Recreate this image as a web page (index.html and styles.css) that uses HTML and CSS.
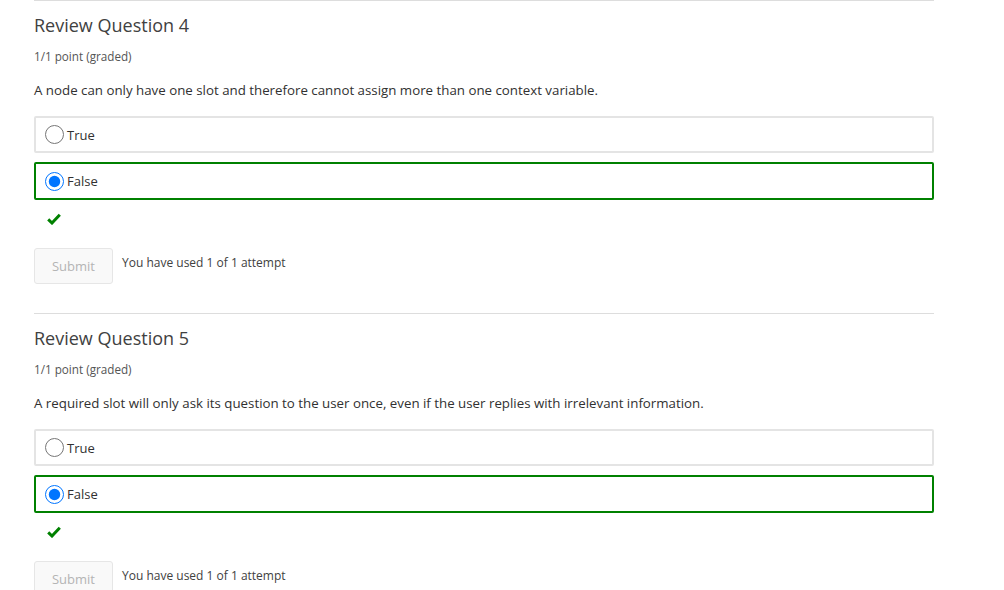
FILE: index.html
```html
<!DOCTYPE html>
<html lang="en">
<head>
<meta charset="utf-8">
<title>Review Questions</title>
<link rel="stylesheet" href="styles.css">
</head>
<body>
<main class="page">
  <section class="problem">
    <h2 class="title">Review Question 4</h2>
    <div class="meta">1/1 point (graded)</div>
    <p class="prompt">A node can only have one slot and therefore cannot assign more than one context variable.</p>
    <div class="choices">
      <label class="choice"><input type="radio" name="q4"><span>True</span></label>
      <label class="choice choice-correct"><input type="radio" name="q4" checked><span>False</span></label>
    </div>
    <div class="status">
      <svg width="14" height="12" viewBox="0 0 14 12"><path d="M1.2 6.4 L5 10 L12.8 1.8" fill="none" stroke="#008100" stroke-width="3"/></svg>
    </div>
    <div class="actions">
      <button class="submit" disabled>Submit</button>
      <span class="attempts">You have used 1 of 1 attempt</span>
    </div>
  </section>
  <section class="problem">
    <h2 class="title">Review Question 5</h2>
    <div class="meta">1/1 point (graded)</div>
    <p class="prompt">A required slot will only ask its question to the user once, even if the user replies with irrelevant information.</p>
    <div class="choices">
      <label class="choice"><input type="radio" name="q5"><span>True</span></label>
      <label class="choice choice-correct"><input type="radio" name="q5" checked><span>False</span></label>
    </div>
    <div class="status">
      <svg width="14" height="12" viewBox="0 0 14 12"><path d="M1.2 6.4 L5 10 L12.8 1.8" fill="none" stroke="#008100" stroke-width="3"/></svg>
    </div>
    <div class="actions">
      <button class="submit" disabled>Submit</button>
      <span class="attempts">You have used 1 of 1 attempt</span>
    </div>
  </section>
</main>
</body>
</html>
```
FILE: styles.css
```css
html, body {
  margin: 0;
  padding: 0;
  background: #fff;
}
body {
  font-family: "Open Sans", "Liberation Sans", sans-serif;
  color: #313131;
  overflow: hidden;
}
.page {
  width: 900px;
  padding: 0 70px 0 34px;
}
.problem {
  border-top: 1px solid #dddddd;
  height: 312px;
}
.title {
  margin: 10px 0 0;
  font-size: 18px;
  line-height: 28px;
  font-weight: 400;
  color: #414141;
}
.meta {
  margin-top: 8px;
  font-size: 11.7px;
  line-height: 18px;
  color: #555;
}
.prompt {
  margin: 15px 0 0;
  font-size: 13.3px;
  line-height: 20px;
  color: #313131;
}
.choices {
  margin-top: 16px;
  display: flex;
  flex-direction: column;
  gap: 9px;
}
.choice {
  box-sizing: border-box;
  display: flex;
  align-items: center;
  height: 37px;
  border: 2px solid #e4e4e4;
  border-radius: 2px;
  font-size: 13px;
  color: #313131;
}
.choice-correct {
  height: 38px;
  border-color: #008100;
}
.choice input {
  width: 19px;
  height: 19px;
  margin: 0 3px 0 9px;
  accent-color: #0075ff;
}
.status {
  margin-top: 12px;
  padding-left: 13px;
  height: 14px;
  display: flex;
  align-items: center;
}
.actions {
  margin-top: 22px;
  display: flex;
  align-items: flex-start;
  gap: 9px;
}
.submit {
  width: 79px;
  height: 36px;
  border: 1px solid #e6e6e6;
  border-radius: 3px;
  background: #f9f9f9;
  color: #b4b4b4;
  font-family: "Open Sans", "Liberation Sans", sans-serif;
  font-size: 13px;
  padding: 0;
}
.attempts {
  margin-top: 7px;
  font-size: 12px;
  line-height: 16px;
  color: #414141;
}
```
